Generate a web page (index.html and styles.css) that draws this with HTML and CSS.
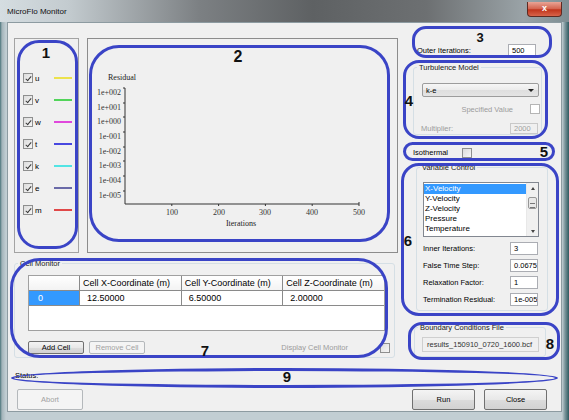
FILE: index.html
```html
<!DOCTYPE html>
<html lang="en">
<head>
    <meta charset="UTF-8">
    <meta name="viewport" content="width=device-width, initial-scale=1.0">
    <title>MicroFlo Monitor</title>
    <link rel="stylesheet" href="styles.css">
</head>
<body>

<div class="window">
    <div class="titlebar">
        <span class="title">MicroFlo Monitor</span>
        <div class="close-btn">x</div>
    </div>

    <div class="client">
        <div class="main">
            <div class="left-col">
                <div class="top-row">
                    <div class="legend-box">
                        <div class="series"><span class="chk on"></span><span class="series-name">u</span><span class="swatch sw-u"></span></div>
                        <div class="series"><span class="chk on"></span><span class="series-name">v</span><span class="swatch sw-v"></span></div>
                        <div class="series"><span class="chk on"></span><span class="series-name">w</span><span class="swatch sw-w"></span></div>
                        <div class="series"><span class="chk on"></span><span class="series-name">t</span><span class="swatch sw-t"></span></div>
                        <div class="series"><span class="chk on"></span><span class="series-name">k</span><span class="swatch sw-k"></span></div>
                        <div class="series"><span class="chk on"></span><span class="series-name">e</span><span class="swatch sw-e"></span></div>
                        <div class="series"><span class="chk on"></span><span class="series-name">m</span><span class="swatch sw-m"></span></div>
                    </div>

                    <div class="chart">
                        <svg class="plot" width="309" height="213" viewBox="0 0 309 213">
                            <text class="axis-title" x="20" y="41">Residual</text>
                            <g class="tick-label" text-anchor="end">
                                <text x="33" y="56">1e+002</text>
                                <text x="33" y="71">1e+001</text>
                                <text x="33" y="85">1e+000</text>
                                <text x="33" y="100">1e-001</text>
                                <text x="33" y="115">1e-002</text>
                                <text x="33" y="129">1e-003</text>
                                <text x="33" y="144">1e-004</text>
                                <text x="33" y="159">1e-005</text>
                            </g>
                            <path class="axis" d="M37 49 V165 H271"/>
                            <path class="tick" d="M35 49 H37 M35 64 H37 M35 78 H37 M35 93 H37 M35 108 H37 M35 122 H37 M35 137 H37 M35 152 H37"/>
                            <path class="tick" d="M83.8 165 V167 M130.6 165 V167 M177.4 165 V167 M224.2 165 V167 M271 163 V167"/>
                            <g class="tick-label" text-anchor="middle">
                                <text x="84" y="176">100</text>
                                <text x="131" y="176">200</text>
                                <text x="177" y="176">300</text>
                                <text x="224" y="176">400</text>
                                <text x="271" y="176">500</text>
                            </g>
                            <text class="axis-title" x="153" y="187" text-anchor="middle">Iterations</text>
                        </svg>
                    </div>
                </div>

                <fieldset class="group cell-monitor">
                    <legend>Cell Monitor</legend>
                    <div class="grid">
                        <table class="grid-table">
                            <tr class="grid-head">
                                <th class="rowhead"></th>
                                <th>Cell X-Coordinate (m)</th>
                                <th>Cell Y-Coordinate (m)</th>
                                <th>Cell Z-Coordinate (m)</th>
                            </tr>
                            <tr class="grid-row">
                                <td class="rowhead selected">0</td>
                                <td>12.50000</td>
                                <td>6.50000</td>
                                <td>2.00000</td>
                            </tr>
                        </table>
                    </div>
                    <div class="cell-buttons">
                        <button class="btn small">Add Cell</button>
                        <button class="btn small disabled">Remove Cell</button>
                        <span class="muted display-label">Display Cell Monitor</span>
                        <span class="chk"></span>
                    </div>
                </fieldset>
            </div>

            <div class="right-col">
                <div class="outer-row">
                    <span>Outer Iterations:</span>
                    <div class="textbox">500</div>
                </div>

                <fieldset class="group turbulence">
                    <legend>Turbulence Model</legend>
                    <div class="combo"><span>k-e</span><span class="combo-arrow"></span></div>
                    <div class="spec-row">
                        <span class="muted">Specified Value</span>
                        <span class="chk off"></span>
                    </div>
                    <div class="param-row mult-row">
                        <span class="muted">Multiplier:</span>
                        <div class="textbox disabled">2000</div>
                    </div>
                </fieldset>

                <div class="iso-row">
                    <span class="iso-label">Isothermal</span>
                    <span class="chk"></span>
                </div>

                <fieldset class="group variables">
                    <legend>Variable Control</legend>
                    <div class="listbox">
                        <div class="list-items">
                            <div class="list-item selected">X-Velocity</div>
                            <div class="list-item">Y-Velocity</div>
                            <div class="list-item">Z-Velocity</div>
                            <div class="list-item">Pressure</div>
                            <div class="list-item">Temperature</div>
                        </div>
                        <div class="scrollbar">
                            <div class="sb-btn"><span class="arrow-up"></span></div>
                            <div class="sb-track"><div class="sb-thumb"></div></div>
                            <div class="sb-btn"><span class="arrow-down"></span></div>
                        </div>
                    </div>
                    <div class="param-row"><span>Inner Iterations:</span><div class="textbox">3</div></div>
                    <div class="param-row"><span>False Time Step:</span><div class="textbox">0.0675</div></div>
                    <div class="param-row"><span>Relaxation Factor:</span><div class="textbox">1</div></div>
                    <div class="param-row"><span>Termination Residual:</span><div class="textbox">1e-005</div></div>
                </fieldset>

                <fieldset class="group bcf">
                    <legend>Boundary Conditions File</legend>
                    <div class="textbox readonly">results_150910_0720_1600.bcf</div>
                </fieldset>
            </div>
        </div>

        <div class="status">Status:</div>

        <div class="bottom-buttons">
            <button class="btn disabled abort">Abort</button>
            <button class="btn run">Run</button>
            <button class="btn close">Close</button>
        </div>
    </div>

    <!-- annotation marks drawn over the screenshot -->
    <div class="mark m1"></div><div class="num n1">1</div>
    <div class="mark m2"></div><div class="num n2">2</div>
    <div class="mark m3"></div><div class="num n3">3</div>
    <div class="mark m4"></div><div class="num n4">4</div>
    <div class="mark m5"></div><div class="num n5">5</div>
    <div class="mark m6"></div><div class="num n6">6</div>
    <div class="mark m7"></div><div class="num n7">7</div>
    <div class="mark m8"></div><div class="num n8">8</div>
    <div class="mark m9"></div><div class="num n9">9</div>
</div>

</body>
</html>
```

FILE: styles.css
```css
body {
    margin: 0;
    background: #3c6870;
    font-family: "Liberation Sans", Arial, sans-serif;
    font-size: 7.5px;
    color: #000;
}
.window {
    position: relative;
    width: 569px;
    height: 420px;
    box-sizing: border-box;
    padding: 0 7px 8px 7px;
    display: flex;
    flex-direction: column;
    background: linear-gradient(90deg, #4a747a 0, #a3b4ba 2px, #c2ced3 6px, #c2ced3 calc(100% - 7px), #7b959b calc(100% - 4px), #2f5a60 100%);
}
.titlebar {
    height: 22px;
    margin: 0 -7px;
    display: flex;
    align-items: center;
    background: linear-gradient(90deg, #d5dde1 0, #c3cbcf 12%, #7c8083 35%, #5e6163 55%, #6d7072 75%, #9aa3a7 92%, #7d8e93 100%);
}
.title {
    padding-left: 7px;
    font-size: 8px;
    color: #101010;
}
.close-btn {
    margin-left: auto;
    margin-right: 7px;
    margin-bottom: 4px;
    width: 35px;
    height: 15px;
    box-sizing: border-box;
    border: 1px solid #5e2a22;
    border-top: none;
    border-radius: 0 0 4px 4px;
    background: linear-gradient(#e9a496, #d3624c 50%, #c0341c 55%, #d8644a);
    color: #fff;
    font-weight: bold;
    font-size: 9px;
    text-align: center;
    line-height: 13px;
}
.client {
    flex: 1;
    background: #f0f0f0;
    border: 1px solid #8d9ba1;
    padding: 15px 6px 1px 6px;
    display: flex;
    flex-direction: column;
}
.main {
    display: flex;
}
.left-col {
    width: 384px;
}
.top-row {
    display: flex;
    gap: 8px;
    height: 215px;
}
.legend-box {
    width: 65px;
    box-sizing: border-box;
    border: 1px solid #a3a3a3;
    padding: 28px 6px 0 8px;
}
.series {
    height: 22px;
    display: flex;
    align-items: center;
}
.series-name {
    margin-left: 2px;
    font-size: 8px;
}
.swatch {
    margin-left: auto;
    width: 18px;
    height: 1.5px;
}
.sw-u { background: #ece24c; }
.sw-v { background: #52d45a; }
.sw-w { background: #e048dc; }
.sw-t { background: #4848e0; }
.sw-k { background: #52e4e4; }
.sw-e { background: #6a6aa8; }
.sw-m { background: #e04848; }

.chk {
    position: relative;
    width: 10px;
    height: 10px;
    box-sizing: border-box;
    border: 1px solid #8e8f8f;
    background: linear-gradient(135deg, #dcdcdc, #f6f6f6);
    flex: none;
}
.chk.on::after {
    content: "";
    position: absolute;
    left: 2.5px;
    top: 0.5px;
    width: 2px;
    height: 5px;
    border: solid #3a3a3a;
    border-width: 0 1.5px 1.5px 0;
    transform: rotate(40deg);
}
.chk.off {
    background: #fff;
    border-color: #b5b5b5;
}
.chart {
    width: 311px;
    box-sizing: border-box;
    border: 1px solid #8c8c8c;
}
.plot {
    display: block;
    font-family: "Liberation Serif", "Times New Roman", serif;
}
.axis-title {
    font-size: 8px;
    fill: #222;
}
.tick-label {
    font-size: 8px;
    fill: #333;
}
.axis, .tick {
    fill: none;
    stroke: #333;
    stroke-width: 1;
}

.group {
    margin: 0;
    padding: 0;
    min-width: 0;
    box-sizing: border-box;
    border: 1px solid #d5dfe5;
    border-radius: 3px;
}
.group legend {
    margin-left: 3px;
    padding: 0 2px;
    line-height: 9px;
    color: #1a1a1a;
}
.cell-monitor {
    margin-top: 5.5px;
    width: 381px;
    height: 99.5px;
}
.grid {
    margin: 7.5px 0 0 13px;
    width: 357px;
    height: 56px;
    box-sizing: border-box;
    border: 1px solid #a0a0a0;
    background: #fff;
}
.grid-table {
    border-collapse: collapse;
    font-size: 9px;
    table-layout: fixed;
}
.grid-table th, .grid-table td {
    height: 14px;
    padding: 0 0 0 3px;
    border-right: 1px solid #8a8a8a;
    border-bottom: 1px solid #8a8a8a;
    font-weight: normal;
    text-align: left;
    white-space: nowrap;
}
.grid-head th {
    background: linear-gradient(#ffffff, #f3f3f3);
    width: 98px;
}
.grid-head th.rowhead {
    width: 48px;
}
.grid-head th:last-child, .grid-row td:last-child {
    border-right: none;
}
.grid-row td {
    padding-left: 7px;
}
.grid-row td.rowhead.selected {
    background: #3399ff;
    color: #fff;
    padding-left: 9px;
}
.cell-buttons {
    margin: 10px 4px 0 13px;
    height: 13px;
    display: flex;
    align-items: center;
}
.display-label {
    margin-left: auto;
    margin-right: 32px;
}
.btn {
    font-family: "Liberation Sans", Arial, sans-serif;
    font-size: 7.5px;
    color: #000;
    padding: 0;
    box-sizing: border-box;
    border: 1px solid #707070;
    border-radius: 2px;
    background: linear-gradient(#f4f4f4, #e8e8e8 50%, #dcdcdc 51%, #d2d2d2);
}
.btn.small {
    width: 56px;
    height: 13px;
}
.btn.small + .btn.small {
    margin-left: 5px;
}
.btn.disabled {
    border-color: #b4b8bb;
    background: #f4f4f4;
    color: #a2a2a2;
}
.muted {
    color: #9c9c9c;
}

.right-col {
    width: 150px;
    margin-left: 7px;
}
.textbox {
    height: 13px;
    width: 28px;
    box-sizing: border-box;
    border: 1px solid #abadb3;
    background: #fff;
    padding-left: 3px;
    line-height: 11px;
    white-space: nowrap;
    overflow: hidden;
}
.textbox.disabled {
    height: 11px;
    line-height: 9px;
    background: #f0f0f0;
    border-color: #c9c9c9;
    color: #a0a0a0;
}
.outer-row {
    margin-top: 6px;
    width: 131px;
    height: 13px;
    box-sizing: border-box;
    padding-left: 12px;
    display: flex;
    align-items: center;
    justify-content: space-between;
}
.turbulence {
    margin: 5.5px 0 0 8px;
    width: 129px;
    height: 72.5px;
}
.combo {
    margin: 11.5px 0 0 8px;
    width: 117px;
    height: 14px;
    box-sizing: border-box;
    border: 1px solid #9c9c9c;
    border-radius: 2px;
    background: linear-gradient(#f6f6f6, #ebebeb 50%, #dedede 51%, #e4e4e4);
    display: flex;
    align-items: center;
    padding: 0 4px 0 3px;
}
.combo-arrow {
    margin-left: auto;
    width: 0;
    height: 0;
    border-left: 3px solid transparent;
    border-right: 3px solid transparent;
    border-top: 3px solid #222;
}
.spec-row {
    margin-top: 7px;
    height: 10px;
    display: flex;
    align-items: center;
    justify-content: flex-end;
    padding-right: 1px;
}
.spec-row .muted {
    margin-right: 17px;
}
.param-row {
    height: 13px;
    display: flex;
    align-items: center;
    justify-content: space-between;
    margin: 4px 9px 0 6px;
}
.mult-row {
    height: 11px;
    margin: 9px 3px 0 7px;
}
.iso-row {
    margin: 12px 0 0 8px;
    height: 11px;
    display: flex;
    align-items: center;
}
.iso-label {
    width: 49px;
}
.variables {
    margin: 4.5px 0 0 11px;
    width: 132px;
    height: 148.5px;
}
.listbox {
    margin: 10.5px 0 5px 6px;
    width: 116px;
    height: 55px;
    box-sizing: border-box;
    border: 1px solid #828790;
    background: #fff;
    display: flex;
    overflow: hidden;
}
.list-items {
    flex: 1;
    padding-top: 1px;
    overflow: hidden;
}
.list-item {
    height: 10px;
    line-height: 10px;
    padding-left: 1px;
    font-size: 8px;
}
.list-item.selected {
    background: #3399ff;
    color: #fff;
}
.scrollbar {
    width: 11px;
    display: flex;
    flex-direction: column;
    background: #f0f0f0;
    border-left: 1px solid #e8e8e8;
}
.sb-btn {
    height: 10px;
    display: flex;
    align-items: center;
    justify-content: center;
}
.arrow-up, .arrow-down {
    width: 0;
    height: 0;
    border-left: 2.5px solid transparent;
    border-right: 2.5px solid transparent;
}
.arrow-up { border-bottom: 3px solid #444; }
.arrow-down { border-top: 3px solid #444; }
.sb-track {
    flex: 1;
    padding-top: 4px;
}
.sb-thumb {
    margin: 0 1px;
    height: 12px;
    box-sizing: border-box;
    border: 1px solid #979797;
    border-radius: 2px;
    background: repeating-linear-gradient(#e8e8e8 0, #e8e8e8 3px, #777 3px, #777 4px);
    background-size: 5px 9px;
    background-position: center 2px;
    background-repeat: no-repeat;
    background-color: #e8e8e8;
}
.variables .param-row + .param-row {
    margin-top: 4px;
}
.bcf {
    margin: 11.5px 0 0 9px;
    width: 132px;
    height: 34.5px;
}
.textbox.readonly {
    margin: 5.5px 0 0 7px;
    width: 117px;
    height: 15px;
    line-height: 13px;
    background: #f0f0f0;
    border-color: #cfcfcf;
    color: #333;
    padding-left: 4px;
}
.status {
    margin-top: 10px;
    height: 15px;
    line-height: 15px;
    padding-left: 1px;
}
.bottom-buttons {
    margin-top: 6px;
    height: 21px;
    display: flex;
}
.bottom-buttons .btn {
    height: 21px;
}
.abort {
    margin-left: 3px;
    width: 66px;
}
.run {
    margin-left: auto;
    width: 63px;
}
.close {
    margin-left: 9px;
    margin-right: 8px;
    width: 63px;
}

/* annotations */
.mark {
    position: absolute;
    box-sizing: border-box;
    border: 3px solid #3a44c6;
}
.num {
    position: absolute;
    transform: translate(-50%, -50%);
    font-size: 15px;
    font-weight: bold;
    line-height: 1;
    color: #111;
}
.m1 { left: 17px; top: 40px; width: 61px; height: 209px; border-radius: 22px; }
.m2 { left: 89px; top: 45px; width: 301px; height: 197px; border-radius: 30px; }
.m3 { left: 412px; top: 26px; width: 140px; height: 32px; border-radius: 14px; }
.m4 { left: 403px; top: 60px; width: 145px; height: 79px; border-radius: 16px; }
.m5 { left: 403px; top: 142px; width: 152px; height: 19px; border-radius: 10px; }
.m6 { left: 401px; top: 163px; width: 158px; height: 153px; border-radius: 18px; }
.m7 { left: 10px; top: 258px; width: 378px; height: 100px; border-radius: 30px; }
.m8 { left: 408px; top: 322px; width: 152px; height: 38px; border-radius: 14px; }
.m9 { left: 11px; top: 368px; width: 547px; height: 20px; border-radius: 50%; }
.n1 { left: 46px; top: 52px; }
.n2 { left: 238px; top: 57px; font-size: 16px; }
.n3 { left: 480px; top: 37px; font-size: 13px; }
.n4 { left: 409px; top: 100px; }
.n5 { left: 544px; top: 151px; }
.n6 { left: 408px; top: 240px; }
.n7 { left: 205px; top: 350px; }
.n8 { left: 550px; top: 343px; }
.n9 { left: 287px; top: 376px; }
```
